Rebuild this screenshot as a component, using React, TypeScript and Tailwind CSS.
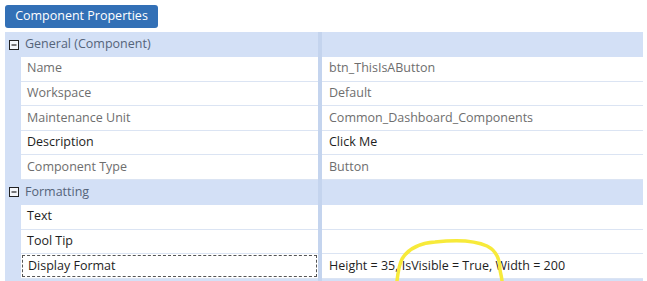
type Row =
  | { kind: 'group'; label: string }
  | { kind: 'prop'; name: string; value: string; readOnly?: boolean; focused?: boolean };

const rows: Row[] = [
  { kind: 'group', label: 'General (Component)' },
  { kind: 'prop', name: 'Name', value: 'btn_ThisIsAButton', readOnly: true },
  { kind: 'prop', name: 'Workspace', value: 'Default', readOnly: true },
  { kind: 'prop', name: 'Maintenance Unit', value: 'Common_Dashboard_Components', readOnly: true },
  { kind: 'prop', name: 'Description', value: 'Click Me' },
  { kind: 'prop', name: 'Component Type', value: 'Button', readOnly: true },
  { kind: 'group', label: 'Formatting' },
  { kind: 'prop', name: 'Text', value: '' },
  { kind: 'prop', name: 'Tool Tip', value: '' },
  { kind: 'prop', name: 'Display Format', value: 'Height = 35, IsVisible = True, Width = 200', focused: true },
  { kind: 'group', label: '' },
];

function MinusBox() {
  return (
    <svg width="10" height="10" viewBox="0 0 10 10" className="shrink-0">
      <rect x="0.5" y="0.5" width="9" height="9" fill="#f4f6fa" stroke="#222" strokeWidth="1" />
      <line x1="2.5" y1="5" x2="7.5" y2="5" stroke="#222" strokeWidth="1.2" />
    </svg>
  );
}

export default function App() {
  return (
    <div
      className="relative w-[647px] h-[281px] overflow-hidden bg-white p-[5px] text-[12.5px]"
      style={{ fontFamily: '"Open Sans", "Noto Sans", sans-serif' }}
    >
      <div className="inline-flex h-[23px] w-[153px] items-center justify-center rounded-[3px] bg-[#3270b6] text-[12.5px] text-white">
        Component Properties
      </div>

      <div className="mt-[4px] w-[638px]">
        {rows.map((row, i) =>
          row.kind === 'group' ? (
            <div key={i} className="flex h-[25px] bg-[#d3e0f6]">
              <div className="flex w-[313px] items-center gap-[6px] pl-[4px] text-[#55647a]">
                <MinusBox />
                {row.label}
              </div>
              <div className="w-[4px] bg-[#c4d4ee]" />
              <div className="flex-1" />
            </div>
          ) : (
            <div key={i} className="flex h-[24.6px]">
              <div className="w-[16px] bg-[#d3e0f6]" />
              <div className="w-[297px] border-b border-[#dbe4f3] bg-white p-px">
                <div
                  className={
                    'flex h-full items-center pl-[5px] ' +
                    (row.focused ? 'border border-dashed border-[#555] pl-[4px] ' : '') +
                    (row.readOnly ? 'text-[#6e6e6e]' : 'text-[#1e1e1e]')
                  }
                >
                  {row.name}
                </div>
              </div>
              <div className="w-[4px] bg-[#c4d4ee]" />
              <div
                className={
                  'flex flex-1 items-center border-b border-[#dbe4f3] bg-white pl-[7px] ' +
                  (row.readOnly ? 'text-[#6e6e6e]' : 'text-[#1e1e1e]')
                }
              >
                {row.value}
              </div>
            </div>
          )
        )}
      </div>

      <svg className="pointer-events-none absolute left-0 top-0" width="647" height="281" viewBox="0 0 647 281">
        <path
          d="M397 281 C398 272 399 265 402 259 C408 249 420 243 435 242 C452 240 472 239 487 246 C497 251 500 260 500 270 C501 275 502 279 502 281"
          fill="none"
          stroke="#f7ea3a"
          strokeWidth="3.5"
          strokeLinecap="round"
        />
      </svg>
    </div>
  );
}
